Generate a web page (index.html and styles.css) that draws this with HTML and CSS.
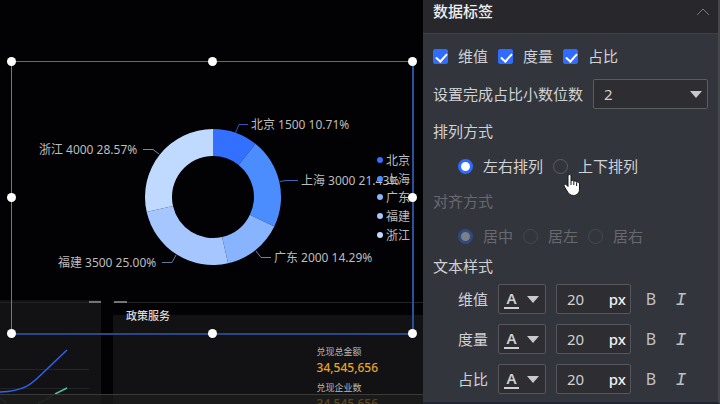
FILE: index.html
```html
<!DOCTYPE html>
<html lang="zh-CN">
<head>
    <meta charset="UTF-8">
    <meta name="viewport" content="width=device-width, initial-scale=1.0">
    <title>数据标签</title>
    <link rel="stylesheet" href="styles.css">
</head>
<body>

<div class="editor">
    <!-- Canvas -->
    <main class="canvas">
        <section class="widget trend">
            <svg width="101" height="104" viewBox="0 0 101 104">
                <path d="M0 2.500H101" stroke="#242424"/>
                <path d="M89 2H101" stroke="#747474" stroke-width="2"/>
                <path d="M0 69.500H89M0 88.500H89" stroke="#242426"/>
                <path d="M0 92C28 91 33 82 46 70L67 50" fill="none" stroke="#2f62f0" stroke-width="1.500"/>
                <path d="M0 98L6 103M38 103C46 100 50 97 55 94" fill="none" stroke="#2b5656"/>
                <path d="M55 94L67 88" stroke="#4cc0a0" stroke-width="1.500"/>
            </svg>
        </section>

        <section class="widget policy">
            <h3>政策服务</h3>
            <div class="policy-body">
                <dl class="metrics">
                    <dt>兑现总金额</dt>
                    <dd>34,545,656</dd>
                    <dt>兑现企业数</dt>
                    <dd>34,545,656</dd>
                </dl>
            </div>
        </section>

        <div class="canvas-edge"></div>

        <section class="widget selected">
            <svg class="donut" width="400" height="271" viewBox="0 1 400 271">
                <!-- Slices -->
                <path fill="#3470ff" d="M201 68A68 68 0 0 1 243.400 82.800L226.600 103.900A41 41 0 0 0 201 95Z"/>
                <path fill="#4b8dff" d="M243.400 82.800A68 68 0 0 1 262.300 165.500L237.900 153.800A41 41 0 0 0 226.600 103.900Z"/>
                <path fill="#88b3ff" d="M262.300 165.500A68 68 0 0 1 216.100 202.300L210.100 176A41 41 0 0 0 237.900 153.800Z"/>
                <path fill="#a6c6ff" d="M216.100 202.300A68 68 0 0 1 134.700 151.100L161 145.100A41 41 0 0 0 210.100 176Z"/>
                <path fill="#c0d9ff" d="M134.700 151.100A68 68 0 0 1 201 68L201 95A41 41 0 0 0 161 145.100Z"/>

                <!-- Label lines -->
                <g fill="none">
                    <path stroke="#2f55b8" d="M223.500 72L227 63.500H236"/>
                    <path stroke="#3f68b4" d="M268 120.500L274 119.500H286"/>
                    <path stroke="#7480a8" d="M244 190L249 196.500H259"/>
                    <path stroke="#66799c" d="M164 194L160 201.500H150"/>
                    <path stroke="#7b899f" d="M147 93L141 88.500H131"/>
                </g>

                <!-- Labels -->
                <g class="chart-text">
                    <text x="239" y="68">北京<tspan dx="3">1500 10.71%</tspan></text>
                    <text x="289" y="124">上海<tspan dx="3">3000 21.43%</tspan></text>
                    <text x="262" y="201">广东<tspan dx="3">2000 14.29%</tspan></text>
                    <text x="46" y="206">福建<tspan dx="3">3500 25.00%</tspan></text>
                    <text x="27" y="93">浙江<tspan dx="3">4000 28.57%</tspan></text>
                </g>

                <!-- Legend -->
                <g class="chart-text">
                    <circle cx="368" cy="99" r="3" fill="#3470ff"/>
                    <text x="374" y="104">北京</text>
                    <circle cx="368" cy="118" r="3" fill="#4b8dff"/>
                    <text x="374" y="123">上海</text>
                    <circle cx="368" cy="136" r="3" fill="#88b3ff"/>
                    <text x="374" y="141">广东</text>
                    <circle cx="368" cy="155" r="3" fill="#a6c6ff"/>
                    <text x="374" y="160">福建</text>
                    <circle cx="368" cy="174" r="3" fill="#c0d9ff"/>
                    <text x="374" y="179">浙江</text>
                </g>
            </svg>
            <span class="handle top left"></span>
            <span class="handle top center"></span>
            <span class="handle top right"></span>
            <span class="handle middle left"></span>
            <span class="handle middle right"></span>
            <span class="handle bottom left"></span>
            <span class="handle bottom center"></span>
            <span class="handle bottom right"></span>
        </section>
    </main>

    <!-- Settings panel -->
    <aside class="panel">
        <header class="panel-header">
            <h2>数据标签</h2>
            <button class="collapse" type="button" aria-label="收起">
                <svg width="14" height="8" viewBox="0 0 14 8"><path d="M1 7L7 1L13 7" fill="none" stroke="#777a80"/></svg>
            </button>
        </header>

        <form class="panel-body">
            <div class="row">
                <label class="option"><input type="checkbox" checked>维值</label>
                <label class="option"><input type="checkbox" checked>度量</label>
                <label class="option"><input type="checkbox" checked>占比</label>
            </div>

            <div class="row">
                <label for="decimals">设置完成占比小数位数</label>
                <select id="decimals" class="decimals">
                    <option>0</option>
                    <option>1</option>
                    <option selected>2</option>
                </select>
            </div>

            <div class="row" id="arrange">排列方式</div>
            <div class="row indent" role="radiogroup" aria-labelledby="arrange">
                <label class="option"><input type="radio" name="arrange" checked>左右排列</label>
                <label class="option hovered"><input type="radio" name="arrange">上下排列
                    <svg class="pointer" width="18" height="24" viewBox="0 0 18 24">
                        <path d="M5.500 1.500C7 1 8 2 8 3.500V8C9 7 10.500 7.400 10.800 8.400C12 7.700 13.200 8.200 13.500 9.200C15 8.700 16.500 9.500 16.500 11V16C16.500 20 14 22.500 10.500 22.500C7 22.500 5.500 20.500 4 18L1 13C.5 11.500 2.500 10.500 3.800 12L5 13.500V3Z" fill="#fff" stroke="#16171a"/>
                        <path d="M8 8V12M10.800 8.500V12M13.600 9.500V13" stroke="#16171a"/>
                    </svg>
                </label>
            </div>

            <div class="row disabled" id="align">对齐方式</div>
            <div class="row indent disabled tight" role="radiogroup" aria-labelledby="align">
                <label class="option"><input type="radio" name="align" checked disabled>居中</label>
                <label class="option"><input type="radio" name="align" disabled>居左</label>
                <label class="option"><input type="radio" name="align" disabled>居右</label>
            </div>

            <div class="row tight">文本样式</div>
            <div class="row indent">
                <label for="dim-size">维值</label>
                <button class="color" type="button" aria-label="维值颜色"><span>A</span></button>
                <div class="size"><input id="dim-size" type="text" value="20"><span>px</span></div>
                <button class="style" type="button">B</button>
                <button class="style italic" type="button">I</button>
            </div>
            <div class="row indent">
                <label for="measure-size">度量</label>
                <button class="color" type="button" aria-label="度量颜色"><span>A</span></button>
                <div class="size"><input id="measure-size" type="text" value="20"><span>px</span></div>
                <button class="style" type="button">B</button>
                <button class="style italic" type="button">I</button>
            </div>
            <div class="row indent tight">
                <label for="ratio-size">占比</label>
                <button class="color" type="button" aria-label="占比颜色"><span>A</span></button>
                <div class="size"><input id="ratio-size" type="text" value="20"><span>px</span></div>
                <button class="style" type="button">B</button>
                <button class="style italic" type="button">I</button>
            </div>
        </form>
    </aside>
</div>

</body>
</html>
```
FILE: styles.css
```css
* {
    box-sizing: border-box;
}
body {
    margin: 0;
    background-color: #000;
    color: #d0d1d4;
    font-family: "Noto Sans", "Noto Sans CJK SC", sans-serif;
    font-size: 15px;
    line-height: 25px;
}
h2, h3, dl, dd {
    margin: 0;
}
button, input, select {
    font: inherit;
    color: inherit;
    margin: 0;
}
.editor {
    display: flex;
    min-height: 100vh;
}

/* Canvas */
.canvas {
    position: relative;
    flex: 1;
    min-width: 0;
    overflow: hidden;
    background-color: #020204;
}
.widget {
    position: absolute;
}
.widget svg {
    display: block;
}
.trend {
    left: 0;
    top: 300px;
    background-color: #121214;
}
.policy {
    left: 113px;
    right: 0;
    top: 302px;
    border-top: 1px solid #242424;
}
.policy::before {
    content: "";
    position: absolute;
    left: 1px;
    top: -2px;
    width: 13px;
    height: 2px;
    background-color: #747474;
}
.policy h3 {
    position: absolute;
    left: 13px;
    top: 5px;
    font-size: 11px;
    font-weight: 500;
    line-height: 16px;
    color: #d8d8da;
}
.policy-body {
    display: flex;
    justify-content: flex-end;
    margin-top: 12px;
    padding: 30px 45px 0 0;
    background-color: #121214;
}
.metrics dt {
    font-size: 9px;
    line-height: 14px;
    color: #b8b8bc;
}
.metrics dd {
    margin-bottom: 4px;
    font-size: 12px;
    font-weight: 500;
    line-height: 18px;
    color: #e8a42c;
}
.canvas-edge {
    position: absolute;
    left: 0;
    right: 0;
    bottom: 0;
    height: 10px;
    border-top: 1px solid #3a3a38;
    background-color: rgba(30, 30, 29, 0.7);
}

/* Selected widget */
.selected {
    left: 11px;
    top: 61px;
    border: 1px solid #4a66d0;
    border-left-color: #74748a;
    border-right: 2px solid #2a4f9c;
    border-bottom: 2px solid #2a4684;
}
.donut {
    overflow: visible;
}
.chart-text {
    font-size: 12px;
    fill: #bdbdbf;
}
.handle {
    position: absolute;
    width: 9px;
    height: 9px;
    border-radius: 50%;
    background-color: #fff;
}
.handle.top {
    top: -5px;
}
.handle.middle {
    top: calc(50% - 5px);
}
.handle.bottom {
    bottom: -5px;
}
.handle.left {
    left: -5px;
}
.handle.center {
    left: calc(50% - 4px);
}
.handle.right {
    right: -5px;
}

/* Panel */
.panel {
    flex: 0 0 297px;
    border-right: 2px solid #46474b;
    border-bottom: 2px solid #232431;
    background-color: #33353c;
}
.panel-header {
    display: flex;
    justify-content: space-between;
    padding: 0 8px 10px 10px;
    border-bottom: 1px solid #404146;
    background-color: #28282c;
}
.panel-header h2 {
    font-size: 15px;
    font-weight: 500;
    line-height: 23px;
    color: #eeeef0;
}
.collapse {
    display: flex;
    align-items: center;
    padding: 0;
    border: none;
    background: none;
}
.panel-body {
    padding: 10px 10px 0;
}
.row {
    display: flex;
    align-items: center;
    gap: 10px;
    margin-bottom: 10px;
}
.row.tight {
    margin-bottom: 5px;
}
.row.indent {
    padding-left: 25px;
}
.row.disabled {
    color: #67696f;
}
.option {
    display: flex;
    align-items: center;
    gap: 10px;
}
.option input {
    appearance: none;
    position: relative;
    width: 15px;
    height: 15px;
    border: 1px solid #5c5e63;
}
.option input[type="checkbox"] {
    border-radius: 2px;
}
.option input[type="radio"] {
    border-radius: 50%;
}
.option input[type="checkbox"]:checked {
    border-color: #2f6bff;
    background-color: #2f6bff;
}
.option input[type="checkbox"]:checked::after {
    content: "";
    position: absolute;
    left: 4px;
    top: 1px;
    width: 5px;
    height: 9px;
    border: solid #fff;
    border-width: 0 2px 2px 0;
    transform: rotate(42deg);
}
.option input[type="radio"]:checked {
    border: 3px solid #2f6bff;
    background-color: #fff;
}
.disabled .option input {
    border-color: #47494f;
}
.disabled .option input[type="radio"]:checked {
    border-color: #31497f;
    background-color: #7d8087;
}
.hovered {
    position: relative;
    cursor: pointer;
}
.pointer {
    position: absolute;
    left: 10px;
    top: 19px;
}
.decimals {
    appearance: none;
    flex: 1;
    height: 30px;
    padding: 0 10px;
    border: 1px solid #5a5c61;
    border-radius: 2px;
    background-color: #2d2d32;
}
.row:has(.decimals) {
    position: relative;
}
.row:has(.decimals)::after {
    content: "";
    position: absolute;
    right: 6px;
    top: 12px;
    border: 6px solid transparent;
    border-top: 7px solid #c8c9cc;
    border-bottom: none;
}
.color {
    display: flex;
    align-items: center;
    justify-content: space-between;
    width: 48px;
    height: 30px;
    padding: 0 6px 0 5px;
    border: 1px solid #55575c;
    border-radius: 2px;
    background-color: #2d2d32;
}
.color span {
    width: 15px;
    height: 19px;
    border-bottom: 2px solid #d0d1d4;
    font-weight: 600;
    line-height: 16px;
}
.color::after {
    content: "";
    border: 6px solid transparent;
    border-top: 7px solid #c8c9cc;
    border-bottom: none;
}
.size {
    display: flex;
    align-items: center;
    width: 75px;
    height: 30px;
    padding: 0 4px 0 10px;
    border: 1px solid #55575c;
    border-radius: 2px;
    background-color: #2d2d32;
}
.size input {
    flex: 1;
    min-width: 0;
    padding: 0;
    border: none;
    outline: none;
    background: none;
}
.size span {
    font-weight: 500;
    color: #f0f0f2;
}
.style {
    width: 20px;
    padding: 0;
    border: none;
    background: none;
    font-size: 16px;
    color: #c0c1c4;
}
.style.italic {
    padding-top: 3px;
    font-family: "Liberation Mono", monospace;
    font-size: 18px;
    font-style: italic;
}
```
